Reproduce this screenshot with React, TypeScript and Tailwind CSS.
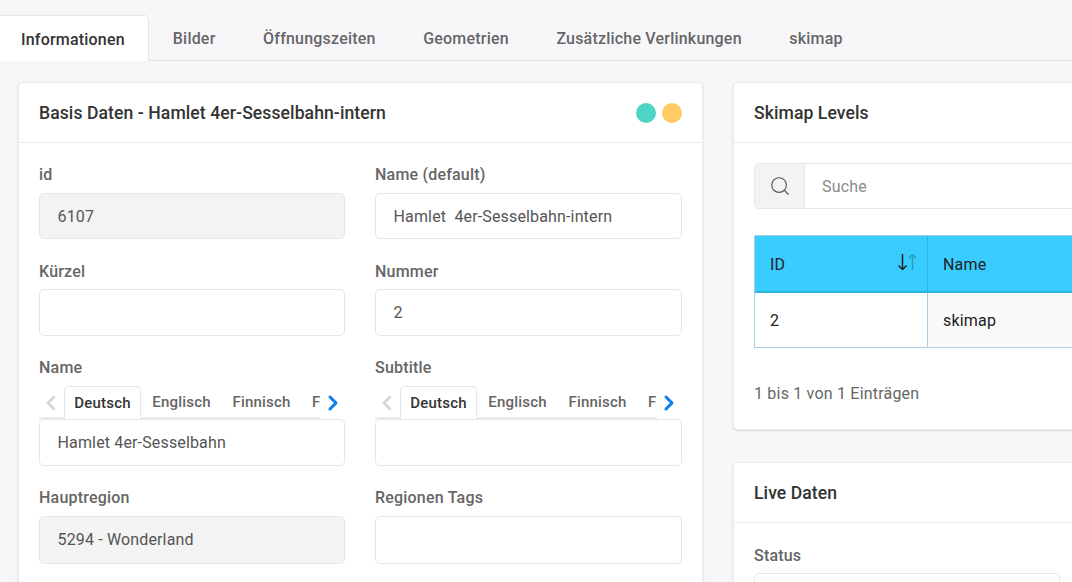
import { ChevronLeft, ChevronRight, Search } from 'lucide-react'

const TABS = ['Bilder', 'Öffnungszeiten', 'Geometrien', 'Zusätzliche Verlinkungen', 'skimap']

function Label({ children, nudge }: { children: React.ReactNode; nudge?: boolean }) {
  return <div className={`h-[22px] ${nudge ? 'mt-[1px] mb-[6px]' : 'mb-[7px]'} text-[16px] leading-[22px] font-medium text-[#666]`}>{children}</div>
}

function Input({ value, disabled, height = 'h-[47px]' }: { value?: string; disabled?: boolean; height?: string }) {
  return (
    <div className={`${height} rounded-[5px] border border-[#e6e6e6] pl-[17.5px] pt-[1px] flex items-center whitespace-pre text-[16px] tracking-[0.15px] text-[#555] ${disabled ? 'bg-[#f3f3f3]' : 'bg-white'}`}>
      {value}
    </div>
  )
}

function Field({ label, value, disabled, height, nudge }: { label: string; value?: string; disabled?: boolean; height?: string; nudge?: boolean }) {
  return (
    <div>
      <Label nudge={nudge}>{label}</Label>
      <Input value={value} disabled={disabled} height={height} />
    </div>
  )
}

function LangField({ label, value }: { label: string; value?: string }) {
  return (
    <div>
      <Label>{label}</Label>
      <div className="relative flex h-[33px] items-end text-[15px] font-medium text-[#666] overflow-hidden">
        <div className="absolute left-0 right-[25px] bottom-0 h-[2px] bg-[#ebebeb]" />
        <ChevronLeft size={24} strokeWidth={2.5} className="mb-[4px] shrink-0 text-[#d5d5d5]" />
        <div className="w-[1px] shrink-0" />
        <div className="relative h-[33px] w-[77px] shrink-0 rounded-t-[5px] border border-b-0 border-[#e6e6e6] bg-white text-[#333] flex items-center justify-center">Deutsch</div>
        <div className="h-[33px] w-[81px] shrink-0 flex items-center justify-center">Englisch</div>
        <div className="h-[33px] w-[79px] shrink-0 flex items-center justify-center">Finnisch</div>
        <div className="h-[33px] w-[24px] shrink-0 pl-[11px] flex items-center overflow-hidden">F</div>
        <ChevronRight size={24} strokeWidth={3} className="-ml-[4px] mb-[4px] shrink-0 text-[#0d7bf2]" />
      </div>
      <Input value={value} />
    </div>
  )
}

function CardHeader({ title, children }: { title: string; children?: React.ReactNode }) {
  return (
    <div className="h-[60px] px-[20px] pt-[1px] border-b border-[#ebebeb] flex items-center justify-between">
      <h2 className="text-[17.6px] tracking-[0.07px] font-medium text-[#333]">{title}</h2>
      {children}
    </div>
  )
}

export default function App() {
  return (
    <div className="w-[1072px] h-[582px] overflow-hidden bg-[#f7f7fa] font-['Roboto',sans-serif] tracking-[0.2px]">
      <div className="h-[61px] pt-[15px] border-b border-[#e0e0e5] flex items-end text-[16px] font-medium text-[#666]">
        <div className="h-[46px] w-[149px] -mb-[1px] pl-[21px] pt-[2px] rounded-tr-[5px] border border-l-0 border-b-0 border-[#e6e6e6] bg-white text-[#333] flex items-center">
          Informationen
        </div>
        {TABS.map((t) => (
          <div key={t} className="h-[45px] px-[23.8px] pt-[2px] flex items-center whitespace-nowrap">{t}</div>
        ))}
      </div>

      <div className="flex gap-[30px] pl-[18px] pt-[21px] items-start">
        <div className="w-[685px] shrink-0 h-[600px] rounded-[5px] border border-[#ebebef] bg-white shadow-sm">
          <CardHeader title="Basis Daten - Hamlet 4er-Sesselbahn-intern">
            <div className="flex gap-[6px]">
              <span className="w-[20px] h-[20px] rounded-full bg-[#4dd4c4]" />
              <span className="w-[20px] h-[20px] rounded-full bg-[#fecb64]" />
            </div>
          </CardHeader>
          <div className="grid grid-cols-[306px_307px] gap-x-[30px] gap-y-[21px] pl-[20px] pt-[21px]">
            <Field label="id" value="6107" disabled height="h-[46px]" />
            <Field label="Name (default)" value="Hamlet  4er-Sesselbahn-intern" height="h-[46px]" />
            <Field label="Kürzel" nudge />
            <Field label="Nummer" value="2" nudge />
            <LangField label="Name" value="Hamlet 4er-Sesselbahn" />
            <LangField label="Subtitle" />
            <Field label="Hauptregion" value="5294 - Wonderland" disabled height="h-[47.5px]" />
            <Field label="Regionen Tags" height="h-[47.5px]" />
          </div>
        </div>

        <div className="w-[685px] shrink-0 flex flex-col gap-[32px]">
          <div className="h-[348px] rounded-[5px] border border-[#ebebef] bg-white shadow-sm">
            <CardHeader title="Skimap Levels" />
            <div className="pl-[20px] pt-[20px]">
              <div className="flex h-[46px] rounded-[5px] border border-[#e6e6e6] overflow-hidden">
                <div className="w-[50px] bg-[#f3f3f3] border-r border-[#e6e6e6] flex items-center justify-center text-[#555]">
                  <Search size={22} strokeWidth={1.25} />
                </div>
                <div className="flex-1 pl-[17px] pt-[1px] flex items-center text-[16px] text-[#8a8a8a]">Suche</div>
              </div>
              <div className="mt-[26px] border border-[#a9cfe0] text-[16px] text-[#222]">
                <div className="flex h-[57px] bg-[#38ccff] border-b-2 border-[#2fb4e0]">
                  <div className="relative w-[173px] pl-[15px] pt-[2px] flex items-center border-r border-[#2fb4e0]">
                    ID
                    <svg viewBox="0 0 20 16" className="absolute right-[9px] top-[18px] w-[20px] h-[16px]" fill="none" strokeWidth="1.5">
                      <path d="M4.5 0v15.5M.5 11.5l4 4 4-4" stroke="#222" />
                      <path d="M14.5 16V.5M11 4l3.5-3.5L18 4" stroke="#2a9cbc" />
                    </svg>
                  </div>
                  <div className="flex-1 pl-[15px] pt-[2px] flex items-center">Name</div>
                </div>
                <div className="flex h-[54px]">
                  <div className="w-[173px] pl-[15px] pt-[1px] flex items-center border-r border-[#a9cfe0]">2</div>
                  <div className="flex-1 pl-[15px] pt-[1px] flex items-center bg-[#fafafa]">skimap</div>
                </div>
              </div>
              <div className="mt-[34px] text-[16px] text-[#666]">1 bis 1 von 1 Einträgen</div>
            </div>
          </div>

          <div className="h-[300px] rounded-[5px] border border-[#ebebef] bg-white shadow-sm">
            <CardHeader title="Live Daten" />
            <div className="pl-[20px] pt-[21px] w-[326px]">
              <Field label="Status" nudge />
            </div>
          </div>
        </div>
      </div>
    </div>
  )
}
